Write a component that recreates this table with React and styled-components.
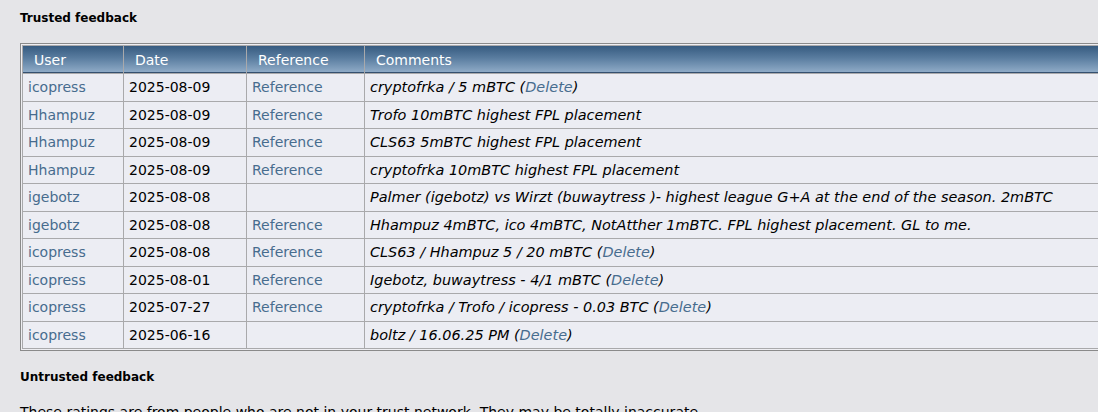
import React from 'react';
import styled, { createGlobalStyle } from 'styled-components';

const GlobalStyle = createGlobalStyle`
    html, body {
        margin: 0;
        padding: 0;
        background: #e5e5e8;
        overflow: hidden;
    }
    body {
        font-family: "DejaVu Sans", Verdana, sans-serif;
        color: #000;
    }
`;

const Page = styled.div`
    padding: 11px 0 0 20px;
    width: 1200px;
`;

const Heading = styled.div`
    font-size: 12px;
    font-weight: bold;
    line-height: 15px;
    margin-bottom: ${(p) => p.$gap}px;
`;

const Frame = styled.div`
    border: 1px solid #8a8a8a;
    padding: 1px;
    background: #eeeef2;
    width: 1110px;
    margin-bottom: 19px;
`;

const Table = styled.table`
    width: 100%;
    border-collapse: separate;
    border-spacing: 1px;
    background: #a9a9ab;
    font-size: 14px;
`;

const Th = styled.th`
    text-align: left;
    font-weight: normal;
    color: #fff;
    height: 27px;
    padding: 0 0 0 11px;
    background: linear-gradient(to bottom, #365b80 0%, #5a7da0 45%, #8eaac6 96%, #34506f 96%, #34506f 100%);
    width: ${(p) => (p.$w ? `${p.$w - 11}px` : 'auto')};
`;

const Td = styled.td`
    background: #ecedf3;
    padding: 4px 4px 4px 5px;
    line-height: 18.5px;
    white-space: nowrap;
    font-style: ${(p) => (p.$italic ? 'italic' : 'normal')};
    font-size: ${(p) => (p.$italic ? '14.45px' : '14px')};
    color: ${(p) => (p.$link ? '#476c8e' : '#000')};
`;

const Link = styled.span`
    color: #476c8e;
`;

const Text = styled.p`
    margin: 0;
    font-size: 14px;
    line-height: 18px;
`;

const rows = [
    { user: 'icopress', date: '2025-08-09', ref: true, comment: 'cryptofrka / 5 mBTC', del: true },
    { user: 'Hhampuz', date: '2025-08-09', ref: true, comment: 'Trofo 10mBTC highest FPL placement' },
    { user: 'Hhampuz', date: '2025-08-09', ref: true, comment: 'CLS63 5mBTC highest FPL placement' },
    { user: 'Hhampuz', date: '2025-08-09', ref: true, comment: 'cryptofrka 10mBTC highest FPL placement' },
    { user: 'igebotz', date: '2025-08-08', ref: false, comment: 'Palmer (igebotz) vs Wirzt (buwaytress )- highest league G+A at the end of the season. 2mBTC' },
    { user: 'igebotz', date: '2025-08-08', ref: true, comment: 'Hhampuz 4mBTC, ico 4mBTC, NotAtther 1mBTC. FPL highest placement. GL to me.' },
    { user: 'icopress', date: '2025-08-08', ref: true, comment: 'CLS63 / Hhampuz 5 / 20 mBTC', del: true },
    { user: 'icopress', date: '2025-08-01', ref: true, comment: 'Igebotz, buwaytress - 4/1 mBTC', del: true },
    { user: 'icopress', date: '2025-07-27', ref: true, comment: 'cryptofrka / Trofo / icopress - 0.03 BTC', del: true },
    { user: 'icopress', date: '2025-06-16', ref: false, comment: 'boltz / 16.06.25 PM', del: true },
];

const App = () => {
  return (
    <Page>
        <GlobalStyle />
        <Heading $gap={17}>Trusted feedback</Heading>
        <Frame>
            <Table>
                <thead>
                    <tr>
                        <Th $w={100}>User</Th>
                        <Th $w={122}>Date</Th>
                        <Th $w={117}>Reference</Th>
                        <Th>Comments</Th>
                    </tr>
                </thead>
                <tbody>
                    {rows.map((r, i) => (
                        <tr key={i}>
                            <Td $link>{r.user}</Td>
                            <Td>{r.date}</Td>
                            <Td $link>{r.ref ? 'Reference' : ''}</Td>
                            <Td $italic>
                                {r.comment}
                                {r.del && (
                                    <> (<Link>Delete</Link>)</>
                                )}
                            </Td>
                        </tr>
                    ))}
                </tbody>
            </Table>
        </Frame>
        <Heading $gap={18}>Untrusted feedback</Heading>
        <Text>These ratings are from people who are not in your trust network. They may be totally inaccurate.</Text>
    </Page>
  )
}

export default App
